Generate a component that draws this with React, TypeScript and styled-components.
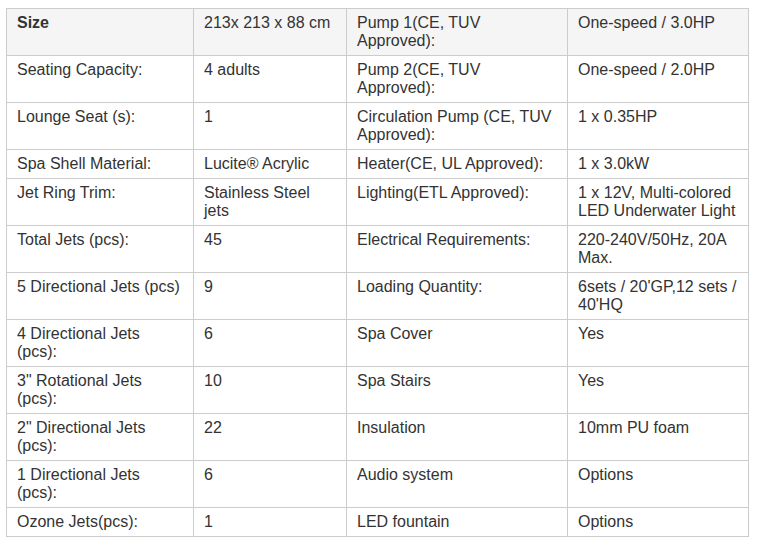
import React from "react";
import styled, { createGlobalStyle } from "styled-components";

const Global = createGlobalStyle`
  html, body { background: #ffffff; }
  body {
    margin: 8px 0 0 6px;
    font-family: "Liberation Sans", Arial, sans-serif;
  }
`;

const Table = styled.table`
  width: 742px;
  table-layout: fixed;
  border-collapse: collapse;
  font-size: 16px;
  line-height: 18px;
  color: #333333;
`;

const Col = styled.col<{ $w: number }>`
  width: ${(p) => p.$w}px;
`;

const Row = styled.tr<{ $head?: boolean }>`
  background: ${(p) => (p.$head ? "#f5f5f5" : "#ffffff")};
`;

const Cell = styled.td<{ $bold?: boolean; $single?: boolean }>`
  border: 1px solid #cccccc;
  padding: 5px 10px;
  vertical-align: top;
  text-align: left;
  font-weight: ${(p) => (p.$bold ? 700 : 400)};
  height: ${(p) => (p.$single ? 18 : 36)}px;
`;

type RowData = [string, string, string, string];

const rows: RowData[] = [
  ["Size", "213x 213 x 88 cm", "Pump 1(CE, TUV Approved):", "One-speed / 3.0HP"],
  ["Seating Capacity:", "4 adults", "Pump 2(CE, TUV Approved):", "One-speed / 2.0HP"],
  ["Lounge Seat (s):", "1", "Circulation Pump (CE, TUV Approved):", "1 x 0.35HP"],
  ["Spa Shell Material:", "Lucite® Acrylic", "Heater(CE, UL Approved):", "1 x 3.0kW"],
  ["Jet Ring Trim:", "Stainless Steel jets", "Lighting(ETL Approved):", "1 x 12V, Multi-colored LED Underwater Light"],
  ["Total Jets (pcs):", "45", "Electrical Requirements:", "220-240V/50Hz, 20A Max."],
  ["5 Directional Jets (pcs)", "9", "Loading Quantity:", "6sets / 20'GP,12 sets / 40'HQ"],
  ["4 Directional Jets (pcs):", "6", "Spa Cover", "Yes"],
  ["3\" Rotational Jets (pcs):", "10", "Spa Stairs", "Yes"],
  ["2\" Directional Jets (pcs):", "22", "Insulation", "10mm PU foam"],
  ["1 Directional Jets (pcs):", "6", "Audio system", "Options"],
  ["Ozone Jets(pcs):", "1", "LED fountain", "Options"],
];

const single = new Set([3, 11]);
const widths = [187, 153, 221, 181];

export default function App() {
  return (
    <>
      <Global />
      <Table>
        <colgroup>
          {widths.map((w, i) => (
            <Col key={i} $w={w} />
          ))}
        </colgroup>
        <tbody>
          {rows.map((r, i) => (
            <Row key={i} $head={i === 0}>
              {r.map((text, j) => (
                <Cell key={j} $bold={i === 0 && j === 0} $single={single.has(i)}>
                  {text}
                </Cell>
              ))}
            </Row>
          ))}
        </tbody>
      </Table>
    </>
  );
}
